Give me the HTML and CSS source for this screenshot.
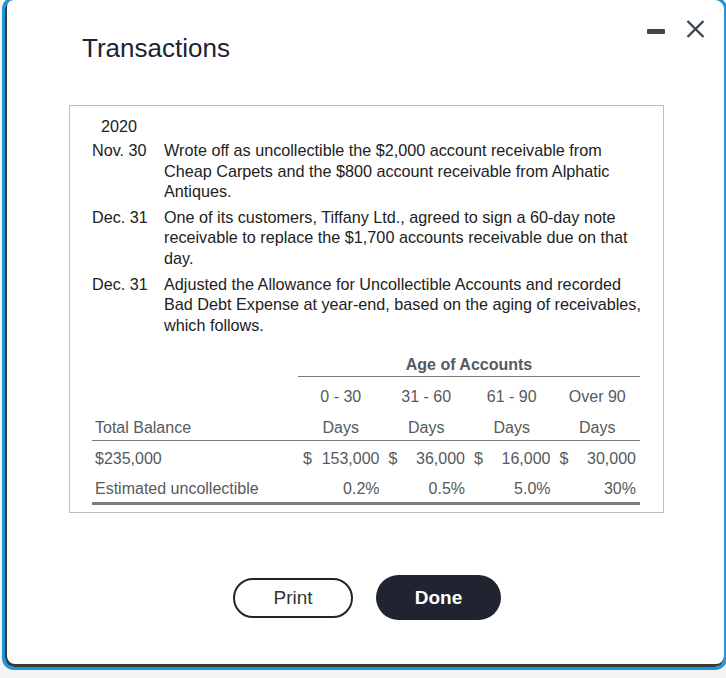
FILE: index.html
```html
<!DOCTYPE html>
<html lang="en">
<head>
<meta charset="utf-8">
<title>Transactions</title>
<link rel="stylesheet" href="styles.css">
</head>
<body>
<div class="modal">
  <div class="header">
    <h1 class="title">Transactions</h1>
    <div class="controls">
      <svg class="ctl-min" width="18" height="18" viewBox="0 0 18 18"><rect x="0" y="9" width="18" height="5" rx="1" fill="#3d4752"/></svg>
      <svg class="ctl-close" width="19" height="18" viewBox="0 0 19 18"><path d="M1.5 1 L17.5 17 M17.5 1 L1.5 17" stroke="#3d4752" stroke-width="2.4" fill="none"/></svg>
    </div>
  </div>

  <div class="box">
    <div class="year">2020</div>
    <div class="entry first">
      <div class="date">Nov. 30</div>
      <div class="desc">Wrote off as uncollectible the $2,000 account receivable from Cheap Carpets and the $800 account receivable from Alphatic Antiques.</div>
    </div>
    <div class="entry">
      <div class="date">Dec. 31</div>
      <div class="desc">One of its customers, Tiffany Ltd., agreed to sign a 60-day note receivable to replace the $1,700 accounts receivable due on that day.</div>
    </div>
    <div class="entry">
      <div class="date">Dec. 31</div>
      <div class="desc">Adjusted the Allowance for Uncollectible Accounts and recorded Bad Debt Expense at year-end, based on the aging of receivables, which follows.</div>
    </div>

    <div class="aging">
      <div class="row r-title">
        <div class="cell lbl"></div>
        <div class="age-head">Age of Accounts</div>
      </div>
      <div class="row r-range">
        <div class="cell lbl"></div>
        <div class="cell c">0 - 30</div>
        <div class="cell c">31 - 60</div>
        <div class="cell c">61 - 90</div>
        <div class="cell c">Over 90</div>
      </div>
      <div class="row r-days">
        <div class="cell lbl">Total Balance</div>
        <div class="cell c">Days</div>
        <div class="cell c">Days</div>
        <div class="cell c">Days</div>
        <div class="cell c">Days</div>
      </div>
      <div class="row r-bal">
        <div class="cell lbl">$235,000</div>
        <div class="cell amt"><span>$</span><span>153,000</span></div>
        <div class="cell amt"><span>$</span><span>36,000</span></div>
        <div class="cell amt"><span>$</span><span>16,000</span></div>
        <div class="cell amt"><span>$</span><span>30,000</span></div>
      </div>
      <div class="row r-est">
        <div class="cell lbl">Estimated uncollectible</div>
        <div class="cell r">0.2%</div>
        <div class="cell r">0.5%</div>
        <div class="cell r">5.0%</div>
        <div class="cell r">30%</div>
      </div>
    </div>
  </div>

  <div class="actions">
    <button class="btn btn-print" type="button">Print</button>
    <button class="btn btn-done" type="button">Done</button>
  </div>
</div>
</body>
</html>
```

FILE: styles.css
```css
* { box-sizing: border-box; }

html, body {
  margin: 0;
  padding: 0;
  background: #f4f4f4;
  font-family: "Liberation Sans", Arial, sans-serif;
  overflow: hidden;
}

.modal {
  margin: -3px 0 0 2px;
  width: 725px;
  height: 673px;
  background: #ffffff;
  border: 3px solid #2196d6;
  border-radius: 12px;
  box-shadow: inset 1px -2px 0 1px #333a40;
  display: flex;
  flex-direction: column;
}

.header {
  display: flex;
  justify-content: space-between;
  align-items: flex-start;
  padding: 20px 19px 0 77px;
}

.title {
  margin: 13px 0 0 0;
  font-size: 26px;
  line-height: 30px;
  font-weight: normal;
  color: #1b2333;
}

.controls {
  display: flex;
  align-items: flex-start;
  gap: 21px;
}

.ctl-min, .ctl-close { display: block; }

.box {
  margin: 42px 0 0 64px;
  width: 595px;
  height: 408px;
  border: 1px solid #bcbcbc;
  padding: 9.5px 12px 0 0;
  font-size: 16.2px;
  line-height: 20.6px;
  color: #222222;
}

.year {
  padding-left: 31px;
}

.entry {
  display: grid;
  grid-template-columns: 72px 485px;
  padding-left: 22px;
  margin-top: 5px;
}

.entry.first { margin-top: 4px; }

.aging {
  margin: 19.5px 0 0 22px;
  width: 548px;
  color: #555a60;
  font-size: 16px;
  line-height: 20px;
}

.row {
  display: grid;
  grid-template-columns: 206px repeat(4, 85.5px);
}

.cell { padding: 0 4px; white-space: nowrap; }
.cell.lbl { padding-left: 3px; }
.cell.c { text-align: center; padding: 0; }
.cell.r { text-align: right; }
.cell.amt { display: flex; justify-content: space-between; padding: 0 4px 0 5px; }

.age-head {
  grid-column: 2 / 6;
  text-align: center;
  font-weight: bold;
  border-bottom: 1px solid #7a7a7a;
  padding-bottom: 1px;
}

.r-range { padding-top: 10px; }

.r-days {
  padding-top: 11px;
  padding-bottom: 2px;
  border-bottom: 1px solid #7a7a7a;
}

.r-bal { padding-top: 8px; }

.r-est {
  padding-top: 10px;
  padding-bottom: 3px;
  border-bottom: 3px solid #7a7a7a;
}

.actions {
  display: flex;
  justify-content: center;
  align-items: center;
  gap: 23px;
  margin-top: 62px;
  padding-left: 5px;
}

.btn {
  font-family: "Liberation Sans", Arial, sans-serif;
  font-size: 19px;
  border-radius: 24px;
  cursor: pointer;
  padding: 0;
}

.btn-print {
  width: 120px;
  height: 40px;
  background: #ffffff;
  color: #333333;
  border: 2px solid #1f2430;
}

.btn-done {
  width: 125px;
  height: 45px;
  background: #1f2430;
  color: #ffffff;
  border: none;
  font-weight: bold;
}
```
